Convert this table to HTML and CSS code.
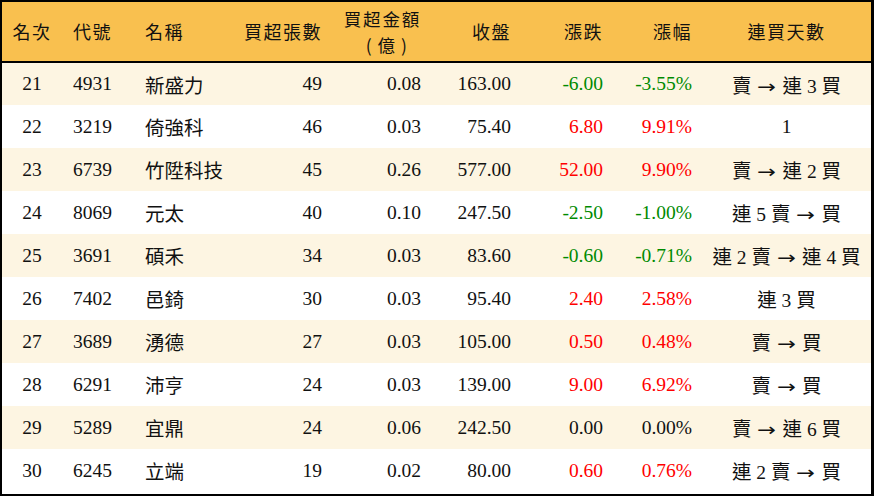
FILE: index.html
```html
<!DOCTYPE html>
<html lang="zh-Hant">
<head>
<meta charset="utf-8">
<link rel="stylesheet" href="styles.css">
</head>
<body>
<div class="frame">
<table class="rank">
<colgroup>
<col class="c1"><col class="c2"><col class="c3"><col class="c4"><col class="c5"><col class="c6"><col class="c7"><col class="c8"><col class="c9">
</colgroup>
<thead>
<tr>
<th class="ctr">名次</th><th class="lft">代號</th><th class="lft">名稱</th><th class="rgt">買超張數</th><th class="rgt two"><span class="l1">買超金額</span><span class="l2"><span class="p">(</span>億<span class="p">)</span></span></th><th class="rgt">收盤</th><th class="rgt">漲跌</th><th class="rgt">漲幅</th><th class="ctr">連買天數</th>
</tr>
</thead>
<tbody>
<tr class="odd"><td class="ctr">21</td><td class="lft">4931</td><td class="lft">新盛力</td><td class="rgt">49</td><td class="rgt">0.08</td><td class="rgt">163.00</td><td class="rgt dn">-6.00</td><td class="rgt dn">-3.55%</td><td class="ctr">賣<span class="arr"><span>→</span></span>連 3 買</td></tr>
<tr><td class="ctr">22</td><td class="lft">3219</td><td class="lft">倚強科</td><td class="rgt">46</td><td class="rgt">0.03</td><td class="rgt">75.40</td><td class="rgt up">6.80</td><td class="rgt up">9.91%</td><td class="ctr">1</td></tr>
<tr class="odd"><td class="ctr">23</td><td class="lft">6739</td><td class="lft">竹陞科技</td><td class="rgt">45</td><td class="rgt">0.26</td><td class="rgt">577.00</td><td class="rgt up">52.00</td><td class="rgt up">9.90%</td><td class="ctr">賣<span class="arr"><span>→</span></span>連 2 買</td></tr>
<tr><td class="ctr">24</td><td class="lft">8069</td><td class="lft">元太</td><td class="rgt">40</td><td class="rgt">0.10</td><td class="rgt">247.50</td><td class="rgt dn">-2.50</td><td class="rgt dn">-1.00%</td><td class="ctr">連 5 賣<span class="arr"><span>→</span></span>買</td></tr>
<tr class="odd"><td class="ctr">25</td><td class="lft">3691</td><td class="lft">碩禾</td><td class="rgt">34</td><td class="rgt">0.03</td><td class="rgt">83.60</td><td class="rgt dn">-0.60</td><td class="rgt dn">-0.71%</td><td class="ctr">連 2 賣<span class="arr"><span>→</span></span>連 4 買</td></tr>
<tr><td class="ctr">26</td><td class="lft">7402</td><td class="lft">邑錡</td><td class="rgt">30</td><td class="rgt">0.03</td><td class="rgt">95.40</td><td class="rgt up">2.40</td><td class="rgt up">2.58%</td><td class="ctr">連 3 買</td></tr>
<tr class="odd"><td class="ctr">27</td><td class="lft">3689</td><td class="lft">湧德</td><td class="rgt">27</td><td class="rgt">0.03</td><td class="rgt">105.00</td><td class="rgt up">0.50</td><td class="rgt up">0.48%</td><td class="ctr">賣<span class="arr"><span>→</span></span>買</td></tr>
<tr><td class="ctr">28</td><td class="lft">6291</td><td class="lft">沛亨</td><td class="rgt">24</td><td class="rgt">0.03</td><td class="rgt">139.00</td><td class="rgt up">9.00</td><td class="rgt up">6.92%</td><td class="ctr">賣<span class="arr"><span>→</span></span>買</td></tr>
<tr class="odd"><td class="ctr">29</td><td class="lft">5289</td><td class="lft">宜鼎</td><td class="rgt">24</td><td class="rgt">0.06</td><td class="rgt">242.50</td><td class="rgt">0.00</td><td class="rgt">0.00%</td><td class="ctr">賣<span class="arr"><span>→</span></span>連 6 買</td></tr>
<tr><td class="ctr">30</td><td class="lft">6245</td><td class="lft">立端</td><td class="rgt">19</td><td class="rgt">0.02</td><td class="rgt">80.00</td><td class="rgt up">0.60</td><td class="rgt up">0.76%</td><td class="ctr">連 2 賣<span class="arr"><span>→</span></span>買</td></tr>
</tbody>
</table>
</div>
</body>
</html>
```

FILE: styles.css
```css
html, body {
  margin: 0;
  padding: 0;
  background: #ffffff;
}
.frame {
  width: 874px;
  height: 496px;
  box-sizing: border-box;
  border: 2px solid #000;
  border-right-width: 3px;
  background: #fff;
  overflow: hidden;
}
.rank {
  width: 869px;
  border-collapse: collapse;
  table-layout: fixed;
  font-family: "Liberation Serif", "Noto Sans CJK TC", serif;
  font-size: 19.5px;
  color: #111;
}
.c1 { width: 60px; }
.c2 { width: 72px; }
.c3 { width: 96px; }
.c4 { width: 102px; }
.c5 { width: 99px; }
.c6 { width: 90px; }
.c7 { width: 92px; }
.c8 { width: 89px; }
.c9 { width: 169px; }
thead tr {
  background: #f9c04f;
  height: 60px;
  border-bottom: 2px solid #000;
}
th {
  font-weight: normal;
  font-family: "Noto Sans CJK TC", serif;
  font-size: 18px;
  letter-spacing: 1.5px;
  padding: 0;
  line-height: 1.2;
}
th.two {
  font-size: 17.5px;
  letter-spacing: 1.8px;
}
th.two .l1,
th.two .l2 {
  display: block;
  line-height: 25.5px;
}
th.two .l2 {
  padding-right: 8px;
  letter-spacing: 0;
}
th.two .p {
  display: inline-block;
  margin: 0 6px;
}
tbody tr {
  height: 43px;
}
tbody tr.odd {
  background: #fdf5e2;
}
td {
  padding: 0;
  white-space: nowrap;
}
.arr {
  display: inline-block;
  width: 31px;
  text-align: center;
  font-family: "DejaVu Sans", sans-serif;
  font-size: 18px;
}
.arr span {
  display: inline-block;
  transform: scaleX(1.25);
}
.ctr { text-align: center; }
.lft { text-align: left; padding-left: 11px; }
.rgt { text-align: right; padding-right: 10px; }
th.lft { padding-left: 11px; }
.up { color: #f00; }
.dn { color: #008a00; }
```
